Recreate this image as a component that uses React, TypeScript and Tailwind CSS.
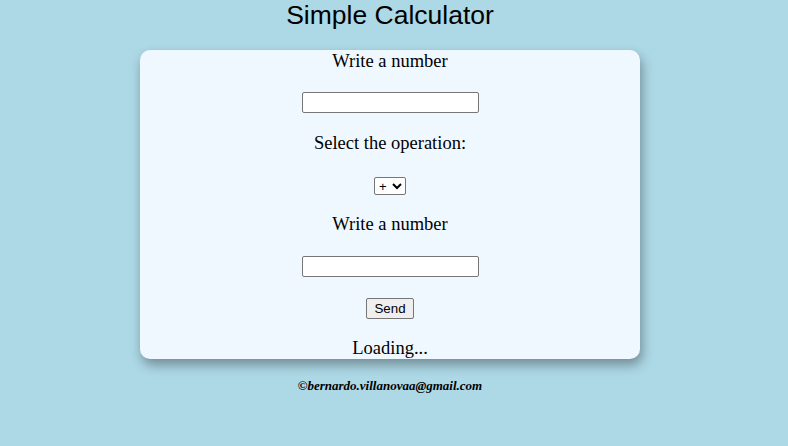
import { useState } from "react";

export default function App() {
  const [a, setA] = useState("");
  const [b, setB] = useState("");
  const [op, setOp] = useState("+");

  return (
    <div className="min-h-[446px] w-full bg-[#add8e6] text-black">
      <div className="w-[780px] flex flex-col items-center">
        <h1 className="mt-[1px] text-[26.5px] leading-[29px] font-['Liberation_Sans',Arial,sans-serif]">
          Simple Calculator
        </h1>

        <div className="mt-[20px] w-[500px] h-[309px] bg-[#f0f8ff] rounded-[10px] shadow-[2px_6px_12px_rgba(0,0,0,0.35)] flex flex-col items-center font-['Liberation_Serif','Times_New_Roman',serif] text-[18.5px] leading-[22px]">
          <p>Write a number</p>
          <input
            value={a}
            onChange={(e) => setA(e.target.value)}
            className="mt-[20px] w-[177px] h-[21px] bg-white border border-[#767676] rounded-[2px] px-1 text-[13px]"
          />
          <p className="mt-[19px]">Select the operation:</p>
          <select
            value={op}
            onChange={(e) => setOp(e.target.value)}
            className="mt-[23px] w-[32px] h-[18px] bg-white border border-[#767676] rounded-[2px] text-[13px] leading-[16px] font-['Liberation_Sans',Arial,sans-serif] appearance-auto"
          >
            <option>+</option>
            <option>-</option>
            <option>*</option>
            <option>/</option>
          </select>
          <p className="mt-[18px]">Write a number</p>
          <input
            value={b}
            onChange={(e) => setB(e.target.value)}
            className="mt-[21px] w-[177px] h-[21px] bg-white border border-[#767676] rounded-[2px] px-1 text-[13px]"
          />
          <button className="mt-[21px] w-[48px] h-[21px] bg-[#efefef] border border-[#767676] rounded-[2px] text-[13.3px] leading-[17px] font-['Liberation_Sans',Arial,sans-serif]">
            Send
          </button>
          <p className="mt-[18px]">Loading...</p>
        </div>

        <p className="mt-[19px] text-[13px] leading-[16px] font-bold italic font-['Liberation_Serif',Georgia,serif]">
          ©bernardo.villanovaa@gmail.com
        </p>
      </div>
    </div>
  );
}
